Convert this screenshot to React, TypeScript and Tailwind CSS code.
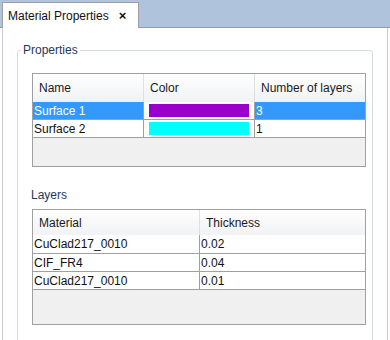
import React from "react";

const font = "font-['Liberation_Sans',Arial,sans-serif]";

function HeaderCell({ children, w, last }: { children: React.ReactNode; w: string; last?: boolean }) {
  return (
    <div
      className={`${w} h-full flex items-center pl-[6px] bg-gradient-to-b from-white to-[#f1f2f4] ${
        last ? "" : "border-r border-[#dcdfe4]"
      } text-[#1a1a1a]`}
    >
      {children}
    </div>
  );
}

function Cell({ children, w, last, sel }: { children?: React.ReactNode; w: string; last?: boolean; sel?: boolean }) {
  return (
    <div
      className={`${w} h-full flex items-center pl-[1px] ${last ? "" : "border-r border-[#a0a0a0]"} ${
        sel ? "bg-[#3399ff] text-white" : "bg-white text-[#111]"
      }`}
    >
      {children}
    </div>
  );
}

export default function App() {
  return (
    <div className={`w-[390px] h-[340px] bg-white overflow-hidden flex flex-col text-[12px] leading-[16px] ${font}`}>
      {/* tab bar */}
      <div className="h-[28px] bg-[#afc3dd] border-b border-[#8e9bb0] flex items-end shrink-0">
        <div className="ml-[2px] h-[26px] w-[137px] bg-white border border-b-0 border-[#a0a0a0] -mb-px flex items-center pl-[5px] text-[#111]">
          <span>Material Properties</span>
          <span className="ml-[10px] font-bold text-[13px] text-[#111]">×</span>
        </div>
      </div>
      {/* body */}
      <div className="flex-1 mx-[2px] border-l border-r border-[#c8cdd5] bg-white px-[14px] pt-[22px]">
        <div className="relative h-[300px] border border-[#d5dbe3] rounded-[3px] pl-[14px] pr-[15px] pt-[22px]">
          <div className="absolute left-[3px] top-[-9px] bg-white px-[2px] text-[#1e395b]">Properties</div>
          {/* properties table */}
          <div className="w-[334px] h-[94px] border border-[#a0a0a0] bg-[#f0f0f0] flex flex-col">
            <div className="h-[28px] flex shrink-0">
              <HeaderCell w="w-[111px]">Name</HeaderCell>
              <HeaderCell w="w-[111px]">Color</HeaderCell>
              <HeaderCell w="flex-1" last>
                Number of layers
              </HeaderCell>
            </div>
            <div className="h-[18px] flex border-b border-[#a0a0a0]">
              <Cell w="w-[111px]" sel>
                Surface 1
              </Cell>
              <div className="w-[111px] h-full border-r border-[#a0a0a0] bg-white flex items-center pl-[5px]">
                <div className="w-[100px] h-[13px] bg-[#9900cc]" />
              </div>
              <Cell w="flex-1" last sel>
                3
              </Cell>
            </div>
            <div className="h-[18px] flex border-b border-[#a0a0a0]">
              <Cell w="w-[111px]">Surface 2</Cell>
              <div className="w-[111px] h-full border-r border-[#a0a0a0] bg-white flex items-center pl-[5px]">
                <div className="w-[100px] h-[13px] bg-[#00ffff]" />
              </div>
              <Cell w="flex-1" last>
                1
              </Cell>
            </div>
          </div>

          <div className="mt-[20px] -ml-[1px] text-[#1e395b]">Layers</div>

          {/* layers table */}
          <div className="mt-[6px] w-[334px] h-[116px] border border-[#a0a0a0] bg-[#f0f0f0] flex flex-col">
            <div className="h-[25px] flex shrink-0">
              <HeaderCell w="w-[167px]">Material</HeaderCell>
              <HeaderCell w="flex-1" last>
                Thickness
              </HeaderCell>
            </div>
            {[
              ["CuClad217_0010", "0.02"],
              ["CIF_FR4", "0.04"],
              ["CuClad217_0010", "0.01"],
            ].map(([m, t], i) => (
              <div key={i} className={`${i === 0 ? "h-[19px]" : "h-[18px]"} flex border-b border-[#a0a0a0]`}>
                <Cell w="w-[167px]">{m}</Cell>
                <Cell w="flex-1" last>
                  {t}
                </Cell>
              </div>
            ))}
          </div>
        </div>
      </div>
    </div>
  );
}
